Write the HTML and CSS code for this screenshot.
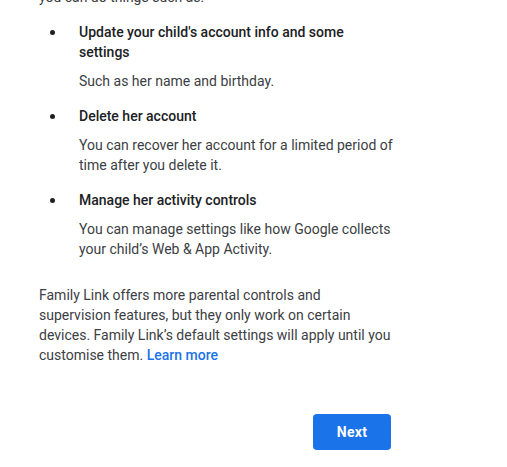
FILE: index.html
```html
<!doctype html>
<html>
<head>
    <meta charset="utf-8">
    <title>Supervision</title>
    <link rel="stylesheet" href="styles.css">
</head>
<body>
    <div class="contenido">
        <p class="intro">you can do things such as:</p>

        <ul class="lista">
            <li class="item">
                <span class="titulo">Update your child's account info and some settings</span>
                <span class="detalle">Such as her name and birthday.</span>
            </li>
            <li class="item">
                <span class="titulo">Delete her account</span>
                <span class="detalle">You can recover her account for a limited period of time after you delete it.</span>
            </li>
            <li class="item">
                <span class="titulo">Manage her activity controls</span>
                <span class="detalle">You can manage settings like how Google collects your child’s Web &amp; App Activity.</span>
            </li>
        </ul>

        <p class="nota">Family Link offers more parental controls and supervision features, but they only work on certain devices. Family Link’s default settings will apply until you customise them. <a href="#" class="enlace">Learn more</a></p>

        <div class="acciones">
            <button class="boton">Next</button>
        </div>
    </div>
</body>
</html>
```

FILE: styles.css
```css
body {
    margin: 0;
    background-color: white;
    font-family: Roboto, "Noto Sans", Arial, sans-serif;
    font-size: 14px;
    line-height: 20px;
    color: #3c4043;
    overflow: hidden;
}
.contenido {
    width: 354px;
    padding-left: 39px;
    margin-top: -13px;
}
.intro {
    margin: 0;
}
.lista {
    list-style: none;
    margin: 15px 0 0 0;
    padding: 0;
    display: flex;
    flex-direction: column;
    gap: 15px;
}
.item {
    display: grid;
    grid-template-columns: 40px 1fr;
    row-gap: 9px;
}
.item::before {
    content: "";
    width: 5px;
    height: 5px;
    border-radius: 50%;
    background-color: #202124;
    margin: 8px 0 0 11px;
    grid-row: 1;
    grid-column: 1;
}
.titulo {
    grid-column: 2;
    font-weight: 500;
    color: #202124;
}
.detalle {
    grid-column: 2;
}
.nota {
    margin: 26px 0 0 0;
}
.enlace {
    color: #1a73e8;
    font-weight: 500;
    text-decoration: none;
}
.acciones {
    display: flex;
    justify-content: flex-end;
    padding-right: 2px;
    margin-top: 49px;
}
.boton {
    width: 78px;
    height: 36px;
    border: none;
    border-radius: 4px;
    background-color: #1a73e8;
    color: white;
    font-family: Roboto, "Noto Sans", Arial, sans-serif;
    font-size: 14px;
    font-weight: 700;
    letter-spacing: 0.25px;
    cursor: pointer;
}
```
